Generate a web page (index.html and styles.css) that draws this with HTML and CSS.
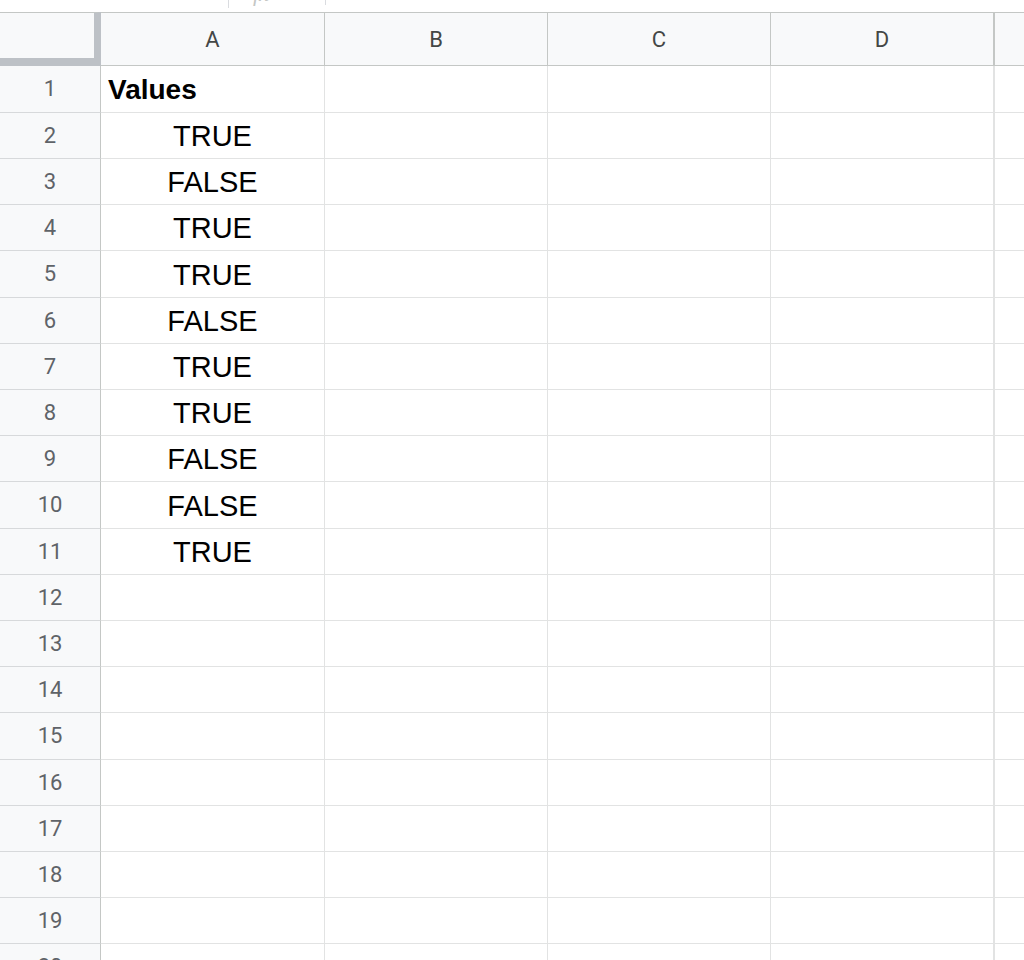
FILE: index.html
```html
<!DOCTYPE html>
<html>
<head>
<meta charset="utf-8">
<link rel="stylesheet" href="styles.css">
</head>
<body>
<div class="formula-strip">
  <div class="fs-spacer"></div>
  <div class="fs-div tall"></div>
  <div class="fx">fx</div>
  <div class="fs-div short"></div>
</div>
<div class="sheet">
  <div class="corner"></div>
  <div class="colhead">A</div>
  <div class="colhead">B</div>
  <div class="colhead">C</div>
  <div class="colhead">D</div>
  <div class="colhead last"></div>

  <div class="rowhead">1</div><div class="cell left bold">Values</div><div class="cell"></div><div class="cell"></div><div class="cell"></div><div class="cell last"></div>
  <div class="rowhead">2</div><div class="cell">TRUE</div><div class="cell"></div><div class="cell"></div><div class="cell"></div><div class="cell last"></div>
  <div class="rowhead">3</div><div class="cell">FALSE</div><div class="cell"></div><div class="cell"></div><div class="cell"></div><div class="cell last"></div>
  <div class="rowhead">4</div><div class="cell">TRUE</div><div class="cell"></div><div class="cell"></div><div class="cell"></div><div class="cell last"></div>
  <div class="rowhead">5</div><div class="cell">TRUE</div><div class="cell"></div><div class="cell"></div><div class="cell"></div><div class="cell last"></div>
  <div class="rowhead">6</div><div class="cell">FALSE</div><div class="cell"></div><div class="cell"></div><div class="cell"></div><div class="cell last"></div>
  <div class="rowhead">7</div><div class="cell">TRUE</div><div class="cell"></div><div class="cell"></div><div class="cell"></div><div class="cell last"></div>
  <div class="rowhead">8</div><div class="cell">TRUE</div><div class="cell"></div><div class="cell"></div><div class="cell"></div><div class="cell last"></div>
  <div class="rowhead">9</div><div class="cell">FALSE</div><div class="cell"></div><div class="cell"></div><div class="cell"></div><div class="cell last"></div>
  <div class="rowhead">10</div><div class="cell">FALSE</div><div class="cell"></div><div class="cell"></div><div class="cell"></div><div class="cell last"></div>
  <div class="rowhead">11</div><div class="cell">TRUE</div><div class="cell"></div><div class="cell"></div><div class="cell"></div><div class="cell last"></div>
  <div class="rowhead">12</div><div class="cell"></div><div class="cell"></div><div class="cell"></div><div class="cell"></div><div class="cell last"></div>
  <div class="rowhead">13</div><div class="cell"></div><div class="cell"></div><div class="cell"></div><div class="cell"></div><div class="cell last"></div>
  <div class="rowhead">14</div><div class="cell"></div><div class="cell"></div><div class="cell"></div><div class="cell"></div><div class="cell last"></div>
  <div class="rowhead">15</div><div class="cell"></div><div class="cell"></div><div class="cell"></div><div class="cell"></div><div class="cell last"></div>
  <div class="rowhead">16</div><div class="cell"></div><div class="cell"></div><div class="cell"></div><div class="cell"></div><div class="cell last"></div>
  <div class="rowhead">17</div><div class="cell"></div><div class="cell"></div><div class="cell"></div><div class="cell"></div><div class="cell last"></div>
  <div class="rowhead">18</div><div class="cell"></div><div class="cell"></div><div class="cell"></div><div class="cell"></div><div class="cell last"></div>
  <div class="rowhead">19</div><div class="cell"></div><div class="cell"></div><div class="cell"></div><div class="cell"></div><div class="cell last"></div>
  <div class="rowhead">20</div><div class="cell"></div><div class="cell"></div><div class="cell"></div><div class="cell"></div><div class="cell last"></div>
</div>
</body>
</html>
```

FILE: styles.css
```css
html, body {
  margin: 0;
  padding: 0;
  background: #ffffff;
  width: 1024px;
  height: 960px;
  overflow: hidden;
}

.formula-strip {
  height: 12px;
  display: flex;
  align-items: flex-start;
  overflow: hidden;
  background: #ffffff;
}

.fs-spacer {
  width: 228px;
  flex: none;
}

.fs-div {
  width: 1px;
  flex: none;
  background: #dadce0;
}

.fs-div.tall { height: 8px; }
.fs-div.short { height: 5px; }

.fx {
  width: 96px;
  flex: none;
  margin-top: -17px;
  padding-left: 24px;
  box-sizing: border-box;
  font-family: "Liberation Serif", serif;
  font-style: italic;
  font-size: 22px;
  line-height: 22px;
  color: #c4c7c5;
}

.sheet {
  display: grid;
  grid-template-columns: 101px 224px 223px 223px 223px 1fr;
  grid-template-rows:
    54px
    47px 46px 46px 46px 47px
    46px 46px 46px 46px 47px
    46px 46px 46px 46px 47px
    46px 46px 46px 46px 46px;
}

.corner {
  box-sizing: border-box;
  background: #f8f9fa;
  border-top: 1px solid #c4c7c5;
  border-right: 7px solid #bdc1c6;
  border-bottom: 8px solid #bdc1c6;
}

.colhead {
  box-sizing: border-box;
  background: #f8f9fa;
  border-top: 1px solid #c4c7c5;
  border-bottom: 1px solid #c4c7c5;
  border-right: 1px solid #c4c7c5;
  display: flex;
  align-items: center;
  justify-content: center;
  font-family: Roboto, "Liberation Sans", sans-serif;
  font-size: 22px;
  color: #444746;
  padding-top: 1px;
}

.colhead.last {
  border-left: 1px solid #c4c7c5;
  border-right: none;
}

.rowhead {
  box-sizing: border-box;
  background: #f8f9fa;
  border-right: 1px solid #c4c7c5;
  border-bottom: 1px solid #d7d9db;
  display: flex;
  align-items: center;
  justify-content: center;
  font-family: Roboto, "Liberation Sans", sans-serif;
  font-size: 22px;
  color: #5f6368;
  padding-bottom: 1px;
}

.cell {
  box-sizing: border-box;
  border-right: 1px solid #e2e3e3;
  border-bottom: 1px solid #e2e3e3;
  display: flex;
  align-items: center;
  justify-content: center;
  font-family: "Liberation Sans", Arial, sans-serif;
  font-size: 29px;
  color: #000000;
  padding-top: 2px;
}

.cell.last {
  border-right: none;
  border-left: 1px solid #e2e3e3;
}

.cell.left {
  justify-content: flex-start;
  padding-left: 7px;
}

.cell.bold {
  font-weight: bold;
  font-size: 28px;
}
```
